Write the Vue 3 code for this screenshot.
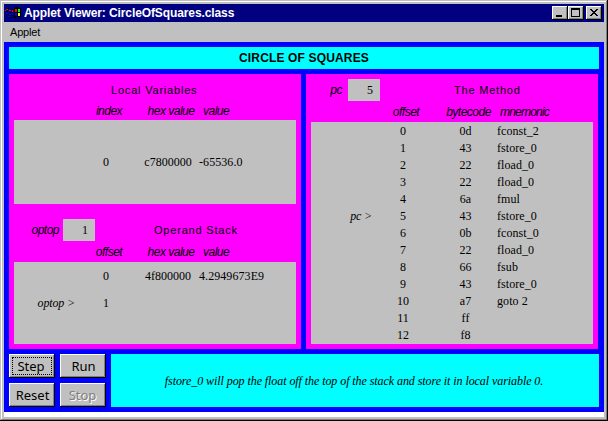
<script setup>
const locals = [{ mark: '', offset: '0', hex: 'c7800000', value: '-65536.0' }]
const stack = [
  { mark: '', offset: '0', hex: '4f800000', value: '4.2949673E9' },
  { mark: 'optop >', offset: '1', hex: '', value: '' },
  { mark: '', offset: '', hex: '', value: '' },
]
const program = [
  ['0d', 'fconst_2'], ['43', 'fstore_0'], ['22', 'fload_0'], ['22', 'fload_0'],
  ['6a', 'fmul'], ['43', 'fstore_0'], ['0b', 'fconst_0'], ['22', 'fload_0'],
  ['66', 'fsub'], ['43', 'fstore_0'], ['a7', 'goto 2'], ['ff', ''], ['f8', ''],
]
const pc = 5
</script>

<template>
  <div class="window">
    <header class="titlebar">
      <svg class="logo" width="17" height="14" viewBox="0 0 17 14" shape-rendering="crispEdges">
        <path d="M9 2h1V1h4v1h2v10h-1v-1h-4v1H9zM2 2h2v1h-2zM6 3h2v1h-2zM1 5h2v1h-2zM5 6h3v1h-3zM2 8h2v1h-2zM6 9h2v1h-2zM3 11h2v1h-2zM6 11h2v1h-2z" fill="#000" />
        <path d="M10 3h2v3h-2zM1 3h2v1h-2zM4 4h2v1h-2zM7 4h1v2h-1zM0 4h1v1h-1z" fill="#f00" />
        <path d="M13 3h2v3h-2z" fill="#0f0" />
        <path d="M10 7h2v3h-2zM1 7h2v1h-2zM4 8h2v1h-2zM7 7h1v2h-1zM3 10h2v1h-2z" fill="#00f" />
        <path d="M13 7h2v3h-2z" fill="#ff0" />
      </svg>
      <span class="caption">Applet Viewer: CircleOfSquares.class</span>
      <button class="ctl" aria-label="Minimize">
        <svg width="12" height="10" shape-rendering="crispEdges"><path d="M2 7h6v2H2z" /></svg>
      </button>
      <button class="ctl" aria-label="Maximize">
        <svg width="12" height="10" shape-rendering="crispEdges"><path d="M1 0h9v9H1zM2 2v6h7V2z" fill-rule="evenodd" /></svg>
      </button>
      <button class="ctl close" aria-label="Close">
        <svg width="12" height="10" shape-rendering="crispEdges">
          <path d="M2 1h2v1h1v1h2V2h1V1h2v1H9v1H8v1H7v1h1v1h1v1h1v1H8V7H7V6H5v1H4v1H2V7h1V6h1V5h1V4H4V3H3V2H2z" />
        </svg>
      </button>
    </header>
    <nav class="menu"><span>Applet</span></nav>

    <main class="applet">
      <h1 class="banner"><span>CIRCLE OF SQUARES</span></h1>
      <div class="panels">
        <section class="panel">
          <div class="head"><h2 class="t-local">Local Variables</h2></div>
          <div class="labels first">
            <i></i><i>index</i><i>hex value</i><i>value</i>
          </div>
          <div class="box locals">
            <div v-for="(r, n) in locals" :key="n" class="row">
              <em>{{ r.mark }}</em><span>{{ r.offset }}</span><span>{{ r.hex }}</span><span>{{ r.value }}</span>
            </div>
          </div>
          <div class="head stack-head">
            <i class="reg">optop</i><span class="field">1</span><h2 class="t-stack">Operand Stack</h2>
          </div>
          <div class="labels">
            <i></i><i>offset</i><i>hex value</i><i>value</i>
          </div>
          <div class="box stack">
            <div v-for="(r, n) in stack" :key="n" class="row">
              <em>{{ r.mark }}</em><span>{{ r.offset }}</span><span>{{ r.hex }}</span><span>{{ r.value }}</span>
            </div>
          </div>
        </section>

        <section class="panel method">
          <div class="head">
            <i class="reg">pc</i><span class="field">5</span><h2 class="t-method">The Method</h2>
          </div>
          <div class="labels">
            <i></i><i>offset</i><i>bytecode</i><i>mnemonic</i>
          </div>
          <div class="box code">
            <div v-for="(r, n) in program" :key="n" class="row">
              <em>{{ n === pc ? 'pc >' : '' }}</em><span>{{ n }}</span><span>{{ r[0] }}</span><span>{{ r[1] }}</span>
            </div>
          </div>
        </section>
      </div>
      <div class="bottom">
        <div class="buttons">
          <button class="btn focused">Step</button>
          <button class="btn">Run</button>
          <button class="btn">Reset</button>
          <button class="btn off">Stop</button>
        </div>
        <p class="message"><span>fstore_0 will pop the float off the top of the stack and store it in local variable 0.</span></p>
      </div>
    </main>
  </div>
</template>

<style>
body { margin: 0; overflow: hidden; }
</style>

<style scoped>
* { box-sizing: border-box; margin: 0; }
.window {
  width: 608px; height: 421px; padding: 4px; color: #000;
  background: linear-gradient(#fff, #fff) 4px 412px / 600px 5px no-repeat #c0c0c0;
  display: flex; flex-direction: column;
  font: 12px/14px "Liberation Sans", Arial, sans-serif;
  box-shadow: inset -1px -1px #000, inset 1px 1px #c0c0c0, inset -2px -2px #808080, inset 2px 2px #fff;
}
.titlebar {
  height: 18px; flex: none; background: #000080; color: #fff;
  display: flex; align-items: center; padding: 0 2px 0 1px;
}
.logo { flex: none; margin-right: 2px; }
.caption { flex: 1; font-weight: bold; font-size: 12px; letter-spacing: -.1px; white-space: nowrap; }
.ctl {
  width: 16px; height: 14px; padding: 2px; border: 0; background: #c0c0c0; display: block;
  box-shadow: inset -1px -1px #000, inset 1px 1px #fff, inset -2px -2px #808080;
}
.ctl svg { display: block; }
.close { margin-left: 2px; }
.menu { height: 20px; flex: none; padding: 3px 6px; }
.menu span { font-size: 11px; letter-spacing: -.2px; }
.applet {
  height: 370px; background: #00f; padding: 5px; display: flex; flex-direction: column; gap: 5px;
}
.banner {
  height: 22px; background: #0ff; font-size: 12px; line-height: 22px; text-align: center;
  letter-spacing: .15px;
}
.panels { height: 275px; display: flex; gap: 5px; }
.panel { width: 292px; background: #f0f; padding: 5px; display: flex; flex-direction: column; }
.head { height: 22px; flex: none; display: flex; align-items: center; }
h2 { font-weight: normal; font-size: 11px; letter-spacing: .8px; white-space: nowrap; }
.t-local { margin-left: 97px; }
.t-stack { margin-left: 59px; }
.t-method { margin-left: 74px; }
.reg { width: 49px; padding-right: 4px; text-align: right; letter-spacing: -.5px; }
.method .reg { width: 37px; padding-right: 6px; }
.field {
  width: 32px; height: 22px; padding-right: 7px; background: #c0c0c0; text-align: right;
  font: 12px/22px "Liberation Serif", "Times New Roman", serif;
}
.stack-head { margin-top: 15px; }
.labels, .row { display: grid; grid-template-columns: 61px 62px 62px 1fr; text-align: center; white-space: nowrap; }
.method .labels, .method .row { grid-template-columns: 61px 62px 63px 1fr; }
.labels { height: 21px; flex: none; align-items: center; padding-left: 3px; letter-spacing: -.5px; }
.labels.first { height: 19px; }
.labels > :last-child, .row > :last-child { text-align: left; }
.labels > :last-child { padding-left: 1px; }
.method .labels > :last-child { padding-left: 0; letter-spacing: -.8px; }
.box {
  background: #c0c0c0; display: grid; grid-auto-rows: 1fr;
  font: 12px/14px "Liberation Serif", "Times New Roman", serif;
}
.row { align-items: center; }
.row > :last-child { letter-spacing: .07px; }
.row em { text-align: right; letter-spacing: -.15px; }
.locals { height: 84px; }
.stack { height: 82px; }
.code { height: 222px; grid-auto-rows: 17px; }
.bottom { display: flex; gap: 5px; height: 53px; }
.buttons { display: grid; grid-template-columns: 46px 46px; grid-template-rows: 24px 24px; gap: 5px; }
.btn {
  border: 0; padding: 0 0 0 1px; background: #c0c0c0; color: #000;
  font: 13px/24px "Noto Sans", "DejaVu Sans", sans-serif; text-align: center;
  box-shadow: inset -1px -1px #000, inset 1px 1px #fff, inset -2px -2px #808080;
}
.focused { outline: 1px dotted #000; outline-offset: -4px; padding-right: 3px; }
.off { color: #808080; text-shadow: 1px 1px #fff; padding-right: 2px; }
.message {
  flex: 1; background: #0ff; text-align: center; white-space: nowrap; padding-right: 2px;
  font: italic 12px/54px "Liberation Serif", "Times New Roman", serif; letter-spacing: -.07px;
}
</style>
